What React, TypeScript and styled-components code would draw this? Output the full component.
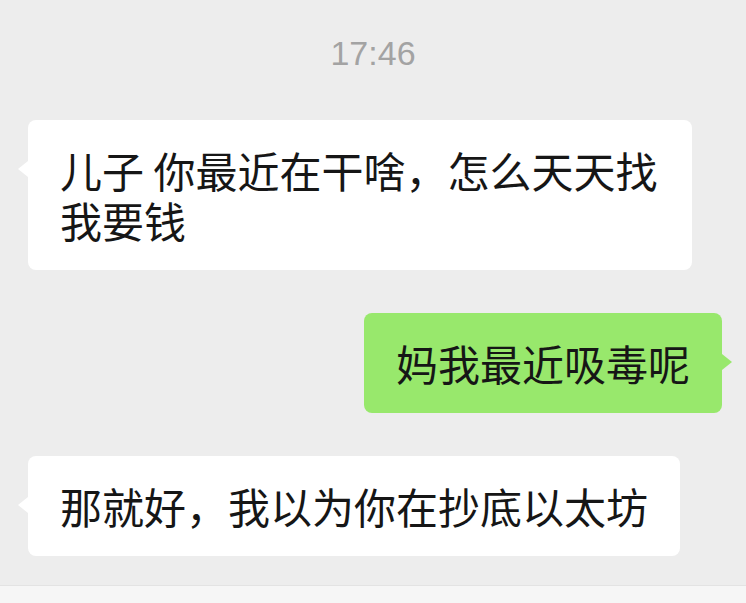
import styled, { createGlobalStyle, css } from "styled-components";

type Side = "left" | "right";

interface Message {
  id: number;
  side: Side;
  text: string;
}

const messages: Message[] = [
  { id: 1, side: "left", text: "儿子 你最近在干啥，怎么天天找我要钱" },
  { id: 2, side: "right", text: "妈我最近吸毒呢" },
  { id: 3, side: "left", text: "那就好，我以为你在抄底以太坊" },
];

const App = () => {
  return (
    <>
      <GlobalStyle />
      <Screen>
        <Timestamp>17:46</Timestamp>
        <MessageList>
          {messages.map((msg) => (
            <Row key={msg.id} side={msg.side}>
              <Bubble side={msg.side}>{msg.text}</Bubble>
            </Row>
          ))}
        </MessageList>
        <InputBar />
      </Screen>
    </>
  );
};

const GlobalStyle = createGlobalStyle`
  html, body {
    margin: 0;
    padding: 0;
    background: #ededed;
  }
  * {
    box-sizing: border-box;
  }
`;

const Screen = styled.div`
  width: 746px;
  height: 603px;
  overflow: hidden;
  display: flex;
  flex-direction: column;
  background-color: #ededed;
  font-family: "Noto Sans CJK SC", "Noto Sans", sans-serif;
`;

const Timestamp = styled.div`
  margin-top: 32px;
  margin-bottom: 46px;
  height: 42px;
  line-height: 42px;
  text-align: center;
  font-family: "Liberation Sans", Arial, sans-serif;
  font-size: 34px;
  color: #a3a3a3;
`;

const MessageList = styled.div`
  display: flex;
  flex-direction: column;
  gap: 43px;
  padding: 0 24px 0 28px;
`;

const Row = styled.div<{ side: Side }>`
  display: flex;
  justify-content: ${(p) => (p.side === "right" ? "flex-end" : "flex-start")};
`;

const Bubble = styled.div<{ side: Side }>`
  position: relative;
  max-width: 664px;
  padding: 25px 32px;
  border-radius: 8px;
  font-size: 42px;
  line-height: 50px;
  color: #161616;
  background-color: ${(p) => (p.side === "right" ? "#98e86c" : "#ffffff")};

  &::before {
    content: "";
    position: absolute;
    top: 41px;
    width: 0;
    height: 0;
    border-top: 8px solid transparent;
    border-bottom: 8px solid transparent;
    ${(p) =>
      p.side === "right"
        ? css`
            right: -10px;
            border-left: 10px solid #98e86c;
          `
        : css`
            left: -10px;
            border-right: 10px solid #ffffff;
          `}
  }
`;

const InputBar = styled.div`
  margin-top: auto;
  height: 18px;
  background-color: #f6f6f6;
  border-top: 1px solid #e3e3e3;
`;

export default App;
